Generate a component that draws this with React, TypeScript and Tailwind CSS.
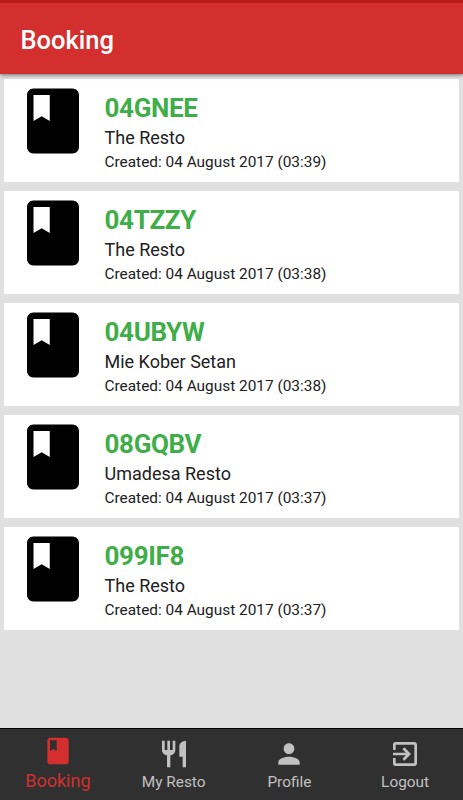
import { MdBook, MdExitToApp, MdPerson, MdRestaurant } from "react-icons/md";

const bookings = [
  { code: "04GNEE", resto: "The Resto", created: "04 August 2017 (03:39)" },
  { code: "04TZZY", resto: "The Resto", created: "04 August 2017 (03:38)" },
  { code: "04UBYW", resto: "Mie Kober Setan", created: "04 August 2017 (03:38)" },
  { code: "08GQBV", resto: "Umadesa Resto", created: "04 August 2017 (03:37)" },
  { code: "099IF8", resto: "The Resto", created: "04 August 2017 (03:37)" },
];

const tabs = [
  { label: "Booking", icon: MdBook, active: true },
  { label: "My Resto", icon: MdRestaurant, active: false },
  { label: "Profile", icon: MdPerson, active: false },
  { label: "Logout", icon: MdExitToApp, active: false },
];

export default function App() {
  return (
    <div className="flex h-[800px] w-[463px] flex-col overflow-hidden bg-[#e0e0e0] font-['Roboto',sans-serif]">
      {/* Toolbar */}
      <header className="z-10 flex h-[74px] shrink-0 items-center border-t-[3px] border-[#b71c1c] bg-[#d32f2f] pl-[20.5px] pt-[2px] shadow-[0_1px_4px_rgba(0,0,0,0.5)]">
        <h1 className="text-[25.5px] font-medium leading-8 text-white">Booking</h1>
      </header>

      {/* Booking list */}
      <main className="flex flex-1 flex-col gap-[9px] px-1 pt-[5px]">
        {bookings.map((booking) => (
          <div key={booking.code} className="flex h-[103px] w-[455px] rounded-[1px] bg-white">
            <MdBook className="ml-[10px] mt-[3px] size-[78px] shrink-0 text-black" />
            <div className="ml-[12.5px] pt-[13px] text-[#212121]">
              <h2 className="text-[26px] font-bold leading-8 tracking-[-0.35px] text-[#3fae49]">{booking.code}</h2>
              <p className="text-[18px] leading-[27px]">{booking.resto}</p>
              <p className="text-[15.4px] leading-[23px]">Created: {booking.created}</p>
            </div>
          </div>
        ))}
      </main>

      {/* Bottom navigation */}
      <nav className="grid h-[72px] shrink-0 grid-cols-4 border-t border-black bg-[#303030]">
        {tabs.map(({ label, icon: Icon, active }) => (
          <div
            key={label}
            className={`flex flex-col items-center ${active ? "pt-[6px] text-[#d32f2f]" : "pt-[9px] text-[#c1c1c1]"}`}
          >
            <Icon className="size-8" />
            <span className={active ? "text-[18px] leading-[28px]" : "text-[15.4px] leading-[25px]"}>{label}</span>
          </div>
        ))}
      </nav>
    </div>
  );
}
